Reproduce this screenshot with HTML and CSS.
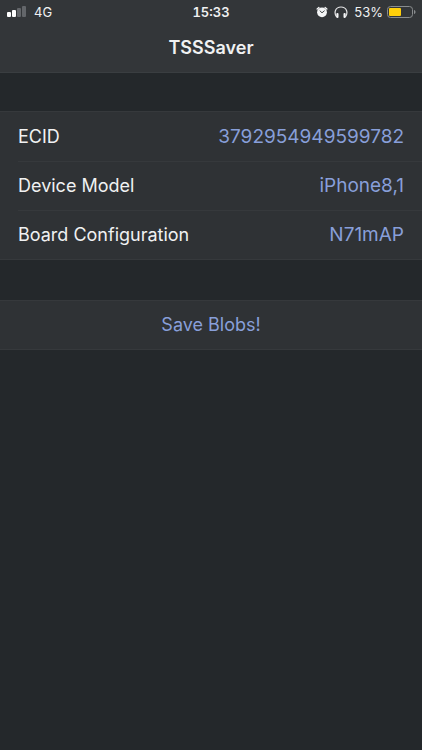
FILE: index.html
```html
<!DOCTYPE html>
<html lang="en">
<head>
<meta charset="utf-8">
<meta name="viewport" content="width=device-width, initial-scale=1">
<title>TSSSaver</title>
<link rel="stylesheet" href="styles.css">
</head>
<body>
<header class="top">
  <div class="status">
    <div class="status-left">
      <svg class="signal" width="20" height="12" viewBox="0 0 20 12" aria-hidden="true">
        <rect x="1" y="6" width="4" height="5" rx="1" fill="#fff"/>
        <rect x="6" y="4" width="4" height="7" rx="1" fill="#fff"/>
        <rect x="11" y="2" width="4" height="9" rx="1" fill="#63666a"/>
        <rect x="16" y="0" width="4" height="11" rx="1" fill="#63666a"/>
      </svg>
      <span>4G</span>
    </div>
    <time class="clock">15:33</time>
    <div class="status-right">
      <svg width="12" height="13" viewBox="0 0 12 13" aria-hidden="true">
        <circle cx="6" cy="6.300" r="4.900" fill="#f4f5f6"/>
        <path d="M1.100 3.100 2.900 1.500M10.900 3.100 9.100 1.500" stroke="#f4f5f6" stroke-width="1.300" stroke-linecap="round"/>
        <path d="M4 4.900 6 6.800l2.300-1.900" fill="none" stroke="#303437" stroke-width=".9" stroke-linecap="round" stroke-linejoin="round"/>
      </svg>
      <svg class="headphones" width="14" height="13" viewBox="0 0 14 13" aria-hidden="true">
        <path d="M2.600 11C-.6 6.300 1.600 1 7 1S14.600 6.300 11.400 11" fill="none" stroke="#e4e5e6" stroke-width="1.200"/>
        <rect x="2.300" y="7" width="2.200" height="5" rx="1" fill="#f4f5f6"/>
        <rect x="9.500" y="7" width="2.200" height="5" rx="1" fill="#f4f5f6"/>
      </svg>
      <span>53%</span>
      <svg class="battery" width="29" height="13" viewBox="0 0 29 13" aria-hidden="true">
        <rect x=".5" y=".5" width="25" height="11" rx="3" fill="none" stroke="#898c8e"/>
        <rect x="2" y="2" width="12" height="8" rx="1" fill="#ffcf0a"/>
        <path d="M27 4c2 .6 2 3.400 0 4z" fill="#898c8e"/>
      </svg>
    </div>
  </div>
  <h1 class="title">TSSSaver</h1>
</header>
<main class="content">
  <dl class="group">
    <div class="row"><dt>ECID</dt><dd>3792954949599782</dd></div>
    <div class="row"><dt>Device Model</dt><dd>iPhone8,1</dd></div>
    <div class="row"><dt>Board Configuration</dt><dd>N71mAP</dd></div>
  </dl>
  <button class="save" type="button">Save Blobs!</button>
</main>
</body>
</html>
```
FILE: styles.css
```css
* {
  box-sizing: border-box;
}

body {
  margin: 0;
  min-height: 100vh;
  background: #24282b;
  color: #f0f1f2;
  font-family: Inter, "Liberation Sans", sans-serif;
  font-size: 18px;
  line-height: 24px;
}

.top {
  background: #333639;
  border-bottom: 1px solid #3a3e41;
}

.status {
  display: grid;
  grid-template-columns: 1fr auto 1fr;
  align-items: center;
  height: 24px;
  padding: 0 6px;
  font-size: 13px;
  line-height: 16px;
}

.status-left,
.status-right {
  display: flex;
  align-items: center;
}

.status-left {
  gap: 8px;
}

.status-right {
  justify-content: flex-end;
  gap: 6px;
}

.battery {
  margin-left: -2px;
}

.clock {
  font-weight: 600;
  font-variant-numeric: tabular-nums;
}

.title {
  margin: 0;
  padding: 12px 0;
  font-size: 18px;
  font-weight: 600;
  line-height: 24px;
  text-align: center;
}

.content {
  display: grid;
  gap: 40px;
  padding-top: 38px;
}

.group {
  margin: 0;
  padding-left: 18px;
  background: #2f3235;
  border-top: 1px solid #36393c;
  border-bottom: 1px solid #36393c;
}

.row {
  display: flex;
  align-items: center;
  justify-content: space-between;
  height: 49px;
  padding-right: 18px;
}

.row + .row {
  border-top: 1px solid #36393c;
}

dd {
  margin: 0;
  color: #889fd9;
  font-size: 19px;
}

.save {
  width: 100%;
  height: 50px;
  padding: 0;
  background: #2f3235;
  border: 0 solid #36393c;
  border-width: 1px 0;
  color: #889fd9;
  font: inherit;
}
```
